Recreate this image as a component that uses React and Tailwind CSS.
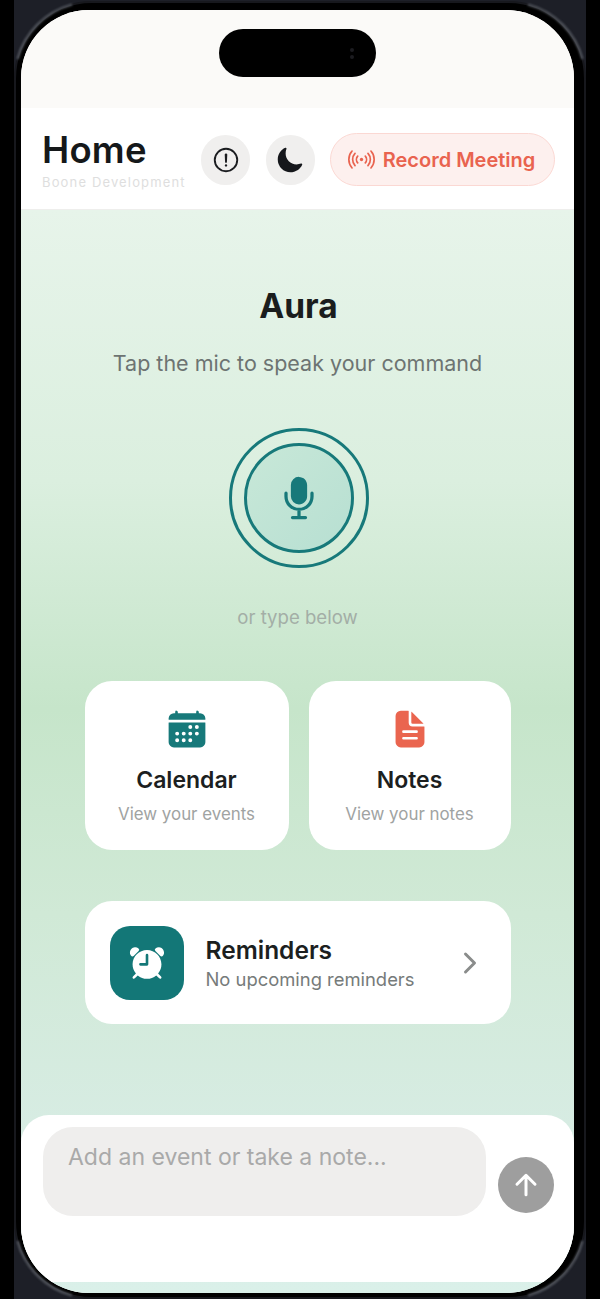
import {
  IoAlarm,
  IoAlertCircleOutline,
  IoArrowUp,
  IoCalendar,
  IoChevronForward,
  IoDocumentText,
  IoMic,
  IoMoon,
  IoRadioOutline,
} from "react-icons/io5";

const ShortcutCard = ({ icon, title, subtitle, className }) => (
  <button className={`h-[169px] bg-white rounded-[27px] flex flex-col items-center pt-[27px] ${className}`}>
    {icon}
    <span className="mt-[12px] text-[23px] leading-[36px] font-semibold text-[#1c1f1f]">{title}</span>
    <span className="mt-[6px] text-[16.9px] leading-[20px] text-[#a0a3a2]">{subtitle}</span>
  </button>
);

const App = () => {
  return (
    <div className="relative w-[600px] h-[1299px] bg-black overflow-hidden pl-[14px] font-['Inter',sans-serif]">
      <div className="w-[572px] h-[1299px] bg-[#1d1f27] overflow-hidden">
        {/* Phone bezel */}
        <div className="w-[572px] h-[1298px] bg-black rounded-[78px] border-2 border-[#17181d] px-[5px] pt-[7px] mt-[1px]">
          <div className="relative w-[553px] h-[1283px] rounded-[68px] overflow-hidden flex flex-col bg-white">
            {/* Dynamic island */}
            <div className="absolute left-[198px] top-[19px] w-[157px] h-[48px] rounded-[24px] bg-black flex items-center justify-end pr-[22px]">
              <div className="flex flex-col gap-[3px]">
                <span className="w-[4px] h-[4px] rounded-full bg-[#1c1c20]" />
                <span className="w-[4px] h-[4px] rounded-full bg-[#1c1c20]" />
              </div>
            </div>

            {/* Status area */}
            <div className="h-[98px] shrink-0 bg-[#fbfaf8]" />

            {/* Header */}
            <header className="h-[102px] shrink-0 bg-white border-b border-[#eeeeec] flex items-start pl-[21px] pr-[19px]">
              <div className="w-[170px] pt-[22px]">
                <h1 className="text-[36.5px] leading-[40px] font-semibold text-[#15181a] tracking-[0.2px]">Home</h1>
                <p className="text-[13px] leading-[16px] mt-[4px] text-[#dedede] tracking-[1.15px] whitespace-nowrap">Boone Development</p>
              </div>
              <div className="flex items-center gap-[15.5px] mt-[25px] flex-1 justify-end">
                <button className="w-[49px] h-[50px] rounded-full bg-[#f0efee] flex items-center justify-center">
                  <IoAlertCircleOutline className="text-[#1b1d20]" size={30} />
                </button>
                <button className="w-[49px] h-[50px] rounded-full bg-[#f0efee] flex items-center justify-center">
                  <IoMoon className="text-[#15171b]" size={28} />
                </button>
                <button className="w-[225px] h-[53px] rounded-full bg-[#fdf0ee] border border-[#fbd8d3] flex items-center justify-center gap-[8px] pr-[2px]">
                  <IoRadioOutline className="text-[#e9634f]" size={27} />
                  <span className="text-[20px] leading-[24px] font-semibold text-[#e9634f] whitespace-nowrap">Record Meeting</span>
                </button>
              </div>
            </header>

            {/* Main */}
            <main className="flex-1 flex flex-col items-center bg-[linear-gradient(180deg,#e7f4ea_0%,#dbefdf_25%,#c6e5ca_46%,#d0e9d6_65%,#d7ece3_85%,#daf0e9_100%)]">
              <h2 className="mt-[74px] ml-[2px] text-[33.5px] leading-[44px] font-bold text-[#1a1d1d]">Aura</h2>
              <p className="mt-[21px] text-[21.5px] leading-[28px] text-[#6d7472]">Tap the mic to speak your command</p>

              <div className="mt-[51px] ml-[2px] w-[140px] h-[140px] rounded-full border-[3px] border-[#17797a] flex items-center justify-center">
                <button className="w-[110px] h-[110px] rounded-full border-[3px] border-[#17797a] bg-[linear-gradient(135deg,#c8e8d8,#b7dfd2)] flex items-center justify-center">
                  <IoMic className="text-[#17797a]" size={52} />
                </button>
              </div>

              <p className="mt-[37px] text-[18.6px] leading-[24px] text-[#a3aea6]">or type below</p>

              <div className="mt-[52px] w-[426px] flex gap-[20px]">
                <ShortcutCard
                  className="w-[204px]"
                  icon={<IoCalendar className="text-[#17797a]" size={42} />}
                  title="Calendar"
                  subtitle="View your events"
                />
                <ShortcutCard
                  className="w-[202px]"
                  icon={<IoDocumentText className="text-[#ea654f]" size={42} />}
                  title="Notes"
                  subtitle="View your notes"
                />
              </div>

              <button className="mt-[51px] w-[426px] h-[123px] bg-white rounded-[27px] flex items-center pl-[25px] pr-[25px] text-left">
                <div className="w-[74px] h-[74px] rounded-[20px] bg-[#137777] flex items-center justify-center">
                  <IoAlarm className="text-white" size={42} />
                </div>
                <div className="ml-[22px] flex-1 pt-[1px]">
                  <div className="text-[24.5px] leading-[30px] font-semibold text-[#1c1f1f]">Reminders</div>
                  <div className="text-[18.4px] leading-[24px] mt-[2px] text-[#767b7a]">No upcoming reminders</div>
                </div>
                <IoChevronForward className="text-[#8a8c8b]" size={32} />
              </button>

              {/* Input panel */}
              <div className="mt-auto mb-[11px] w-full h-[167px] bg-white rounded-t-[28px] flex items-start pl-[22px] pr-[20px] pt-[12px]">
                <div className="w-[443px] h-[89px] rounded-[30px] bg-[#efeeed] px-[25px] pt-[15px] text-[23px] leading-[30px] text-[#a9a9a9]">
                  Add an event or take a note...
                </div>
                <button className="ml-[12px] mt-[30px] w-[56px] h-[56px] rounded-full bg-[#9e9e9e] flex items-center justify-center">
                  <IoArrowUp className="text-white" size={32} />
                </button>
              </div>
            </main>
          </div>
        </div>
      </div>

      {/* Bezel corner highlights */}
      <svg className="absolute left-0 top-0 blur-[1px]" width="600" height="1299" fill="none" stroke="#7f848e" strokeWidth="2" strokeOpacity="0.7">
        <path d="M17.6 59 A77 77 0 0 1 72 4.6" />
        <path d="M528 4.6 A77 77 0 0 1 582.4 59" />
        <path d="M17.6 1241 A77 77 0 0 0 72 1295.4" />
        <path d="M528 1295.4 A77 77 0 0 0 582.4 1241" />
      </svg>
    </div>
  );
};

export default App;
